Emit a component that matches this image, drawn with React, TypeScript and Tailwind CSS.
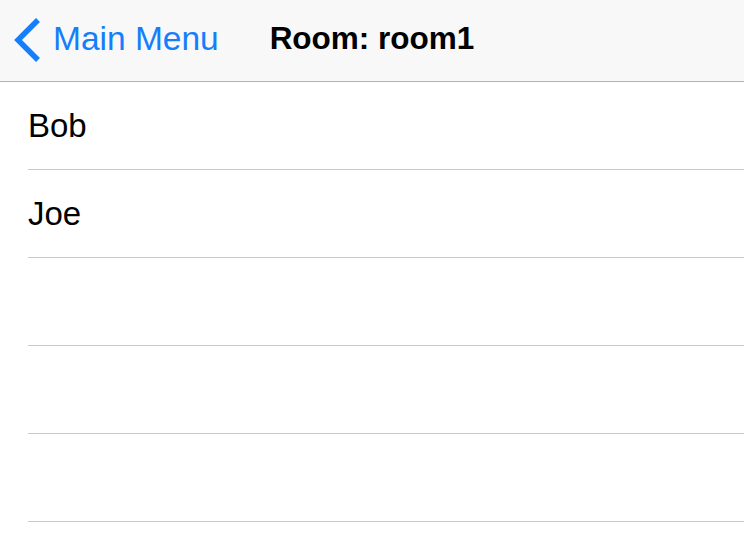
const people = ['Bob', 'Joe', '', '', '', ''];

export default function App() {
  return (
    <div className="w-[744px] h-[544px] overflow-hidden bg-white font-['Liberation_Sans',Arial,sans-serif]">
      <div className="h-[82px] bg-[#f8f8f8] border-b border-[#b2b2b2] grid grid-cols-[1fr_auto_1fr] items-center pb-[4px]">
        <div className="flex items-center text-[#157efb]">
          <svg width="30" height="46" viewBox="0 0 30 46" className="ml-[13px] mr-[10px] mt-[2px]">
            <path d="M25 3 L5 23 L25 43" fill="none" stroke="currentColor" strokeWidth="5.5" strokeLinecap="butt" strokeLinejoin="miter" />
          </svg>
          <span className="text-[33.5px] leading-none">Main Menu</span>
        </div>
        <div className="text-[31.5px] font-bold text-black leading-none">Room: room1</div>
        <div />
      </div>
      <div className="pl-[28px]">
        {people.map((name, i) => (
          <div key={i} className="h-[88px] border-b border-[#c8c7cc] flex items-center">
            <span className="text-[33px] text-black">{name}</span>
          </div>
        ))}
      </div>
    </div>
  );
}
